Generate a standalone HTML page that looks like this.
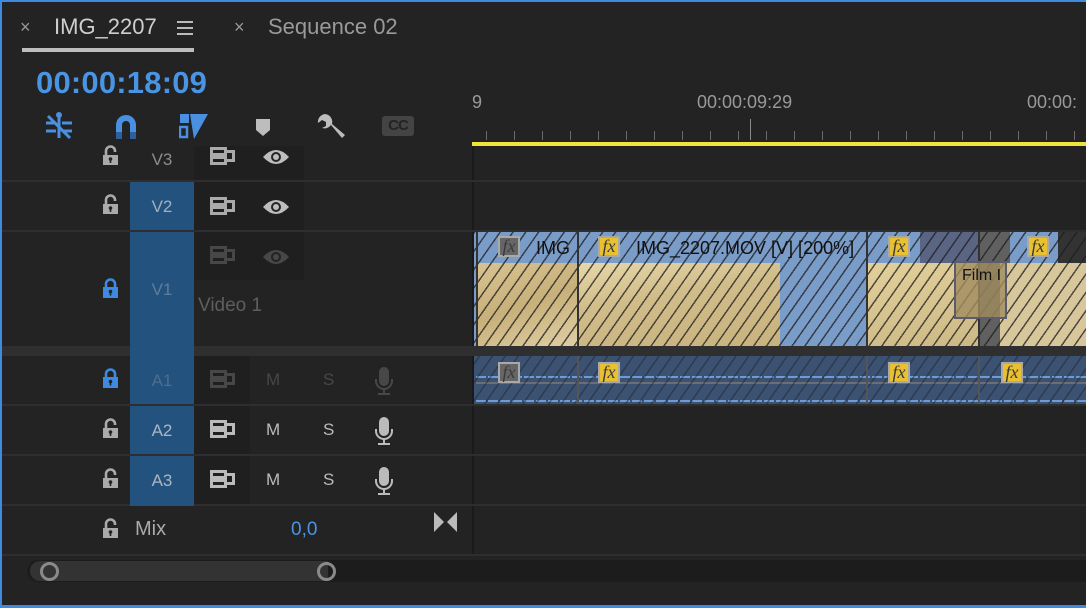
<!DOCTYPE html>
<html><head><meta charset="utf-8"><style>
*{margin:0;padding:0;box-sizing:border-box}
body{width:1086px;height:608px;background:#232323;position:relative;overflow:hidden;font-family:"Liberation Sans",sans-serif}
.a{position:absolute}
.t{color:#9a9a9a;font-size:18px}
.lab{position:absolute;left:130px;width:64px;background:#24527e;color:#8fa3b8;font-size:17px;text-align:center}
.dk{position:absolute;background:#1f1f1f}
.hr{position:absolute;left:2px;height:2px;background:#2e2e2e}
.hatch{background-image:repeating-linear-gradient(-55deg,transparent 0 9px,rgba(30,30,30,.75) 9px 10.5px)}
.fx{position:absolute;width:22px;height:21px;border:2px solid #a9a9a9;font-style:italic;font-size:18px;color:#3a3a3a;text-align:center;line-height:17px;font-family:"Liberation Serif",serif}
</style></head><body>
<svg width="0" height="0" style="position:absolute">
<defs>
<symbol id="lock" viewBox="0 0 17 20"><path d="M4 10V6a4.5 4.5 0 0 1 9 0v4" fill="none" stroke="currentColor" stroke-width="2.6"/><rect x="1" y="9" width="15" height="11" fill="currentColor"/><circle cx="8.5" cy="13.5" r="1.8" fill="#232323"/><rect x="7.7" y="13.5" width="1.6" height="4" fill="#232323"/></symbol>
<symbol id="lockc" viewBox="0 0 17 20"><path d="M4 10V6a4.5 4.5 0 0 1 9 0v1" fill="none" stroke="currentColor" stroke-width="2.6"/><rect x="1" y="10" width="15" height="10" fill="currentColor"/><circle cx="8.5" cy="14" r="1.8" fill="#232323"/><rect x="7.7" y="14" width="1.6" height="4" fill="#232323"/></symbol>
<symbol id="tog" viewBox="0 0 25 18"><path d="M1.5 1.5h14v6h-14zM1.5 10.5h14v6h-14zM15.5 4.5h8v9h-8z" fill="none" stroke="currentColor" stroke-width="3"/></symbol>
<symbol id="eye" viewBox="0 0 28 16"><path d="M1 8Q14-6 27 8Q14 22 1 8z" fill="currentColor"/><circle cx="14" cy="8" r="5" fill="#232323"/><circle cx="14" cy="8" r="3" fill="currentColor"/></symbol>
<symbol id="mic" viewBox="0 0 20 28"><rect x="5" y="0" width="10" height="19" rx="5" fill="currentColor"/><path d="M2 12v2a8 8 0 0 0 16 0v-2" fill="none" stroke="currentColor" stroke-width="2"/><path d="M10 22v4M4 27h12" stroke="currentColor" stroke-width="2"/></symbol>
</defs></svg>

<div class="a" style="left:0;top:0;width:1086px;height:2px;background:#3d8ae0"></div>
<div class="a" style="left:0;top:0;width:2px;height:608px;background:#3d8ae0"></div>
<div class="a" style="left:0;top:605px;width:1086px;height:3px;background:#3d8ae0"></div>

<div class="a t" style="left:20px;top:17px;font-size:18px;color:#999">×</div>
<div class="a" style="left:54px;top:14px;font-size:22px;color:#cfcfcf">IMG_2207</div>
<div class="a" style="left:177px;top:21px;width:16px;height:2px;background:#bbb;box-shadow:0 6px 0 #bbb,0 12px 0 #bbb"></div>
<div class="a" style="left:22px;top:48px;width:172px;height:4px;background:#bdbdbd"></div>
<div class="a t" style="left:234px;top:17px;color:#999">×</div>
<div class="a" style="left:268px;top:14px;font-size:22px;color:#9a9a9a">Sequence 02</div>

<div class="a" style="left:36px;top:65px;font-size:31px;font-weight:bold;color:#4a94e4;letter-spacing:.2px">00:00:18:09</div>

<svg class="a" style="left:44px;top:112px" width="30" height="28" viewBox="0 0 30 28"><g stroke="#4a8fe0" stroke-width="3" fill="none"><path d="M15 2v24"/><path d="M2 11h10M18 11h10M2 19h10M18 19h10"/><path d="M4 4l22 22"/></g><circle cx="15" cy="3" r="3" fill="#4a8fe0"/></svg>
<svg class="a" style="left:114px;top:113px" width="24" height="26" viewBox="0 0 24 26"><path d="M2 26V12a10 10 0 0 1 20 0v14h-6V12a4 4 0 0 0-8 0v14z" fill="#4a8fe0"/><rect x="2" y="19" width="6" height="7" fill="#2b5f9e"/><rect x="16" y="19" width="6" height="7" fill="#2b5f9e"/></svg>
<svg class="a" style="left:179px;top:113px" width="30" height="28" viewBox="0 0 30 28"><rect x="1" y="1" width="9" height="9" fill="#4a8fe0"/><path d="M1 14h7v10H1z" fill="none" stroke="#4a8fe0" stroke-width="2.5"/><path d="M11 1h18L15 26z" fill="#4a8fe0"/></svg>
<svg class="a" style="left:255px;top:118px" width="16" height="18" viewBox="0 0 16 18"><path d="M1 1h14v11l-7 6-7-6z" fill="#bdbdbd"/></svg>
<svg class="a" style="left:315px;top:112px" width="30" height="30" viewBox="0 0 30 30"><path d="M10 2a8 8 0 0 0-7 9l4-3 4 2 0 4-4 2a8 8 0 0 0 9-3l11 13 3-3-13-11a8 8 0 0 0-7-10z" fill="#bdbdbd"/></svg>
<div class="a" style="left:382px;top:116px;width:32px;height:20px;background:#444;border-radius:3px;color:#232323;font-weight:bold;font-size:15px;text-align:center;line-height:20px;letter-spacing:-1px">CC</div>

<div class="a" style="left:472px;top:92px;font-size:18px;color:#999">9</div>
<div class="a" style="left:697px;top:92px;font-size:18px;color:#999">00:00:09:29</div>
<div class="a" style="left:1027px;top:92px;font-size:18px;color:#999">00:00:</div>
<div class="a" style="left:486px;top:131px;width:600px;height:9px;background:repeating-linear-gradient(90deg,#6a6a6a 0 1px,transparent 1px 28px)"></div>
<div class="a" style="left:750px;top:119px;width:1px;height:21px;background:#888"></div>
<div class="a" style="left:472px;top:142px;width:614px;height:4px;background:#f0e43a"></div>

<div class="a" style="left:472px;top:146px;width:2px;height:410px;background:#1a1a1a"></div>

<div class="dk" style="left:194px;top:146px;width:110px;height:35px"></div>
<div class="dk" style="left:194px;top:182px;width:110px;height:48px"></div>
<div class="dk" style="left:194px;top:232px;width:110px;height:48px"></div>
<div class="dk" style="left:194px;top:356px;width:56px;height:48px"></div>
<div class="dk" style="left:194px;top:406px;width:56px;height:48px"></div>
<div class="dk" style="left:194px;top:456px;width:56px;height:48px"></div>

<div class="hr" style="top:180px;width:1084px"></div>
<div class="hr" style="top:230px;width:1084px"></div>
<div class="a" style="left:2px;top:346px;width:1084px;height:10px;background:#2f2f2f"></div>
<div class="hr" style="top:404px;width:1084px"></div>
<div class="hr" style="top:454px;width:1084px"></div>
<div class="hr" style="top:504px;width:1084px"></div>
<div class="hr" style="top:554px;width:1084px"></div>

<div class="a" style="left:130px;top:150px;width:64px;text-align:center;color:#8c8c8c;font-size:17px">V3</div>
<div class="lab" style="top:182px;height:48px;line-height:50px;color:#9fb0c2">V2</div>
<div class="lab" style="top:232px;height:114px;line-height:116px;color:#5f7d9b">V1</div>
<div class="lab" style="top:346px;height:10px"></div>
<div class="lab" style="top:356px;height:48px;line-height:50px;color:#4d6d8e">A1</div>
<div class="lab" style="top:406px;height:48px;line-height:50px;color:#a8b6c5">A2</div>
<div class="lab" style="top:456px;height:50px;line-height:50px;color:#a8b6c5">A3</div>
<div class="a" style="left:198px;top:295px;font-size:19px;color:#5e5e5e">Video 1</div>

<svg class="a" style="left:102px;top:145px;color:#aaa" width="17" height="20"><use href="#lockc"/></svg>
<svg class="a" style="left:102px;top:194px;color:#aaa" width="17" height="20"><use href="#lockc"/></svg>
<svg class="a" style="left:102px;top:278px;color:#3d8ae0" width="17" height="20"><use href="#lock"/></svg>
<svg class="a" style="left:102px;top:368px;color:#3d8ae0" width="17" height="20"><use href="#lock"/></svg>
<svg class="a" style="left:102px;top:418px;color:#aaa" width="17" height="20"><use href="#lockc"/></svg>
<svg class="a" style="left:102px;top:468px;color:#aaa" width="17" height="20"><use href="#lockc"/></svg>
<svg class="a" style="left:102px;top:518px;color:#aaa" width="17" height="20"><use href="#lockc"/></svg>

<svg class="a" style="left:210px;top:147px;color:#aaa" width="25" height="18"><use href="#tog"/></svg>
<svg class="a" style="left:262px;top:149px;color:#bdbdbd" width="28" height="16"><use href="#eye"/></svg>
<svg class="a" style="left:210px;top:197px;color:#aaa" width="25" height="18"><use href="#tog"/></svg>
<svg class="a" style="left:262px;top:199px;color:#bdbdbd" width="28" height="16"><use href="#eye"/></svg>
<svg class="a" style="left:210px;top:246px;color:#474747" width="25" height="18"><use href="#tog"/></svg>
<svg class="a" style="left:262px;top:249px;color:#474747" width="28" height="16"><use href="#eye"/></svg>

<svg class="a" style="left:210px;top:370px;color:#474747" width="25" height="18"><use href="#tog"/></svg>
<div class="a" style="left:266px;top:370px;font-size:17px;color:#474747">M</div>
<div class="a" style="left:323px;top:370px;font-size:17px;color:#474747">S</div>
<svg class="a" style="left:374px;top:367px;color:#474747" width="20" height="28"><use href="#mic"/></svg>
<svg class="a" style="left:210px;top:420px;color:#bbb" width="25" height="18"><use href="#tog"/></svg>
<div class="a" style="left:266px;top:420px;font-size:17px;color:#bbb">M</div>
<div class="a" style="left:323px;top:420px;font-size:17px;color:#bbb">S</div>
<svg class="a" style="left:374px;top:417px;color:#bbb" width="20" height="28"><use href="#mic"/></svg>
<svg class="a" style="left:210px;top:470px;color:#bbb" width="25" height="18"><use href="#tog"/></svg>
<div class="a" style="left:266px;top:470px;font-size:17px;color:#bbb">M</div>
<div class="a" style="left:323px;top:470px;font-size:17px;color:#bbb">S</div>
<svg class="a" style="left:374px;top:467px;color:#bbb" width="20" height="28"><use href="#mic"/></svg>

<div class="a" style="left:135px;top:518px;font-size:20px;color:#aaa">Mix</div>
<div class="a" style="left:291px;top:519px;font-size:19px;color:#4a94e4">0,0</div>
<svg class="a" style="left:434px;top:512px" width="23" height="20" viewBox="0 0 23 20"><path d="M0 0l10 10L0 20zM23 0L13 10l10 10z" fill="#bbb"/></svg>

<div class="a" style="left:474px;top:232px;width:612px;height:114px;background:#7a9cc8"></div>
<div class="a" style="left:476px;top:263px;width:101px;height:83px;background:linear-gradient(160deg,#d8c391,#c8b07a 50%,#e0cfa4)"></div>
<div class="a" style="left:578px;top:263px;width:202px;height:83px;background:linear-gradient(170deg,#e7d7a9,#d1bd8a 40%,#c8b27e)"></div>
<div class="a" style="left:868px;top:263px;width:110px;height:83px;background:linear-gradient(170deg,#e2cf9a,#cdb985)"></div>
<div class="a" style="left:920px;top:232px;width:58px;height:31px;background:#5a6584"></div>
<div class="a" style="left:980px;top:232px;width:105px;height:114px;background:#606060"></div>
<div class="a" style="left:1000px;top:263px;width:86px;height:83px;background:#d8c79a"></div>
<div class="a" style="left:1058px;top:232px;width:28px;height:31px;background:#333"></div>
<div class="a" style="left:1010px;top:232px;width:48px;height:31px;background:#7a9cc8"></div>
<div class="a hatch" style="left:474px;top:232px;width:612px;height:114px"></div>
<div class="a" style="left:476px;top:232px;width:2px;height:114px;background:#333"></div>
<div class="a" style="left:577px;top:232px;width:2px;height:114px;background:#333"></div>
<div class="a" style="left:866px;top:232px;width:2px;height:114px;background:#333"></div>
<div class="a" style="left:978px;top:232px;width:2px;height:114px;background:#333"></div>
<div class="fx" style="left:498px;top:236px;background:#666">fx</div>
<div class="a" style="left:536px;top:238px;font-size:18px;color:#111">IMG</div>
<div class="fx" style="left:598px;top:236px;background:#e8c030">fx</div>
<div class="a" style="left:636px;top:238px;font-size:18px;color:#111">IMG_2207.MOV [V] [200%]</div>
<div class="fx" style="left:888px;top:236px;background:#e8c030">fx</div>
<div class="fx" style="left:1027px;top:236px;background:#e8c030">fx</div>
<div class="a" style="left:954px;top:261px;width:53px;height:58px;background:rgba(160,140,95,.8);border:2px solid #5c5c6a;font-size:16px;color:#111;padding:4px 0 0 6px;overflow:hidden;white-space:nowrap">Film I</div>

<div class="a" style="left:474px;top:356px;width:612px;height:48px;background:#3b5273"></div>
<div class="a" style="left:476px;top:376px;width:610px;height:2px;background:repeating-linear-gradient(90deg,#6d9bd6 0 10px,transparent 10px 12px)"></div>
<div class="a" style="left:476px;top:382px;width:610px;height:2px;background:#6a6f77"></div>
<div class="a" style="left:476px;top:400px;width:610px;height:2px;background:repeating-linear-gradient(90deg,#6d9bd6 0 10px,transparent 10px 12px)"></div>
<div class="a hatch" style="left:474px;top:356px;width:612px;height:48px;opacity:.6"></div>
<div class="a" style="left:577px;top:356px;width:2px;height:48px;background:#555"></div>
<div class="a" style="left:866px;top:356px;width:2px;height:48px;background:#555"></div>
<div class="a" style="left:978px;top:356px;width:2px;height:48px;background:#555"></div>
<div class="fx" style="left:498px;top:362px;background:#666">fx</div>
<div class="fx" style="left:598px;top:362px;background:#e8c030">fx</div>
<div class="fx" style="left:888px;top:362px;background:#e8c030">fx</div>
<div class="fx" style="left:1001px;top:362px;background:#e8c030">fx</div>

<div class="a" style="left:27px;top:560px;width:1059px;height:22px;background:#1c1c1c;border-radius:11px 0 0 11px"></div>
<div class="a" style="left:30px;top:561px;width:298px;height:20px;background:#333;border-radius:10px 0 0 10px"></div>
<div class="a" style="left:40px;top:562px;width:19px;height:19px;border:3px solid #8a8a8a;border-radius:50%"></div>
<div class="a" style="left:317px;top:562px;width:19px;height:19px;border:3px solid #8a8a8a;border-radius:50%"></div>
</body></html>
